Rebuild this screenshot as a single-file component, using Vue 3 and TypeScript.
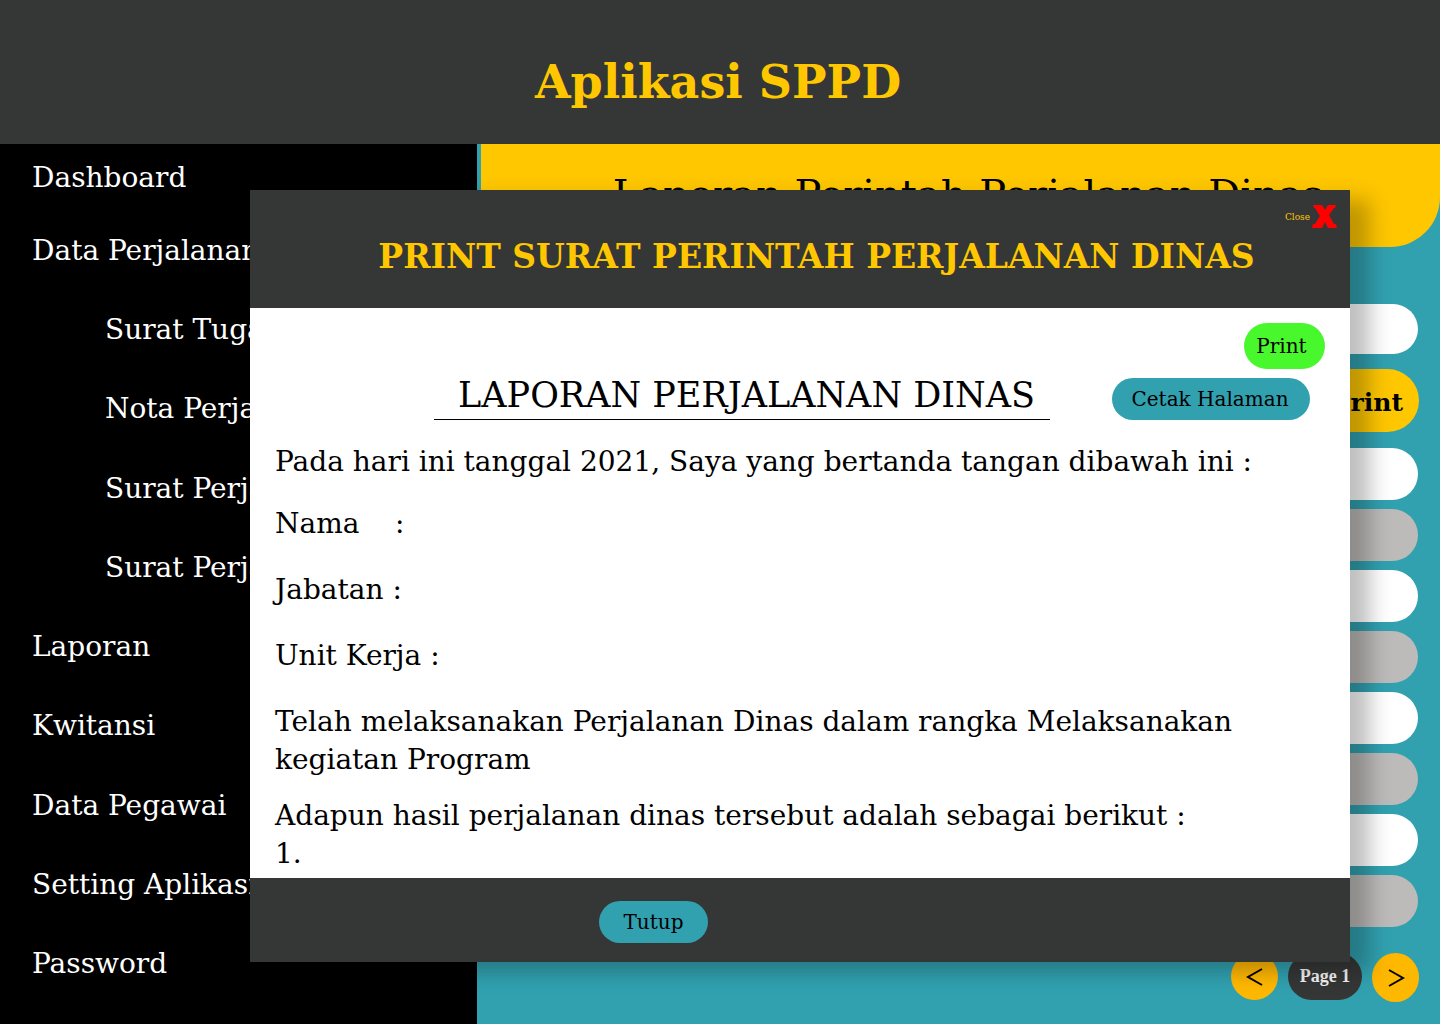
<script setup lang="ts">
interface MenuItem {
  label: string
  nested?: boolean
}

const menu: MenuItem[] = [
  { label: 'Data Perjalanan' },
  { label: 'Surat Tugas', nested: true },
  { label: 'Nota Perjalanan', nested: true },
  { label: 'Surat Perjalanan', nested: true },
  { label: 'Surat Perjalanan', nested: true },
  { label: 'Laporan' },
  { label: 'Kwitansi' },
  { label: 'Data Pegawai' },
  { label: 'Setting Aplikasi' },
  { label: 'Password' },
]

const fields: string[] = ['Nama\u00a0\u00a0\u00a0 :', 'Jabatan :', 'Unit Kerja :']
const rowCount = 8
</script>

<template>
  <div class="page">
    <header class="topbar">
      <h1>Aplikasi SPPD</h1>
    </header>

    <div class="body">
      <nav class="sidebar">
        <a class="item" href="#">Dashboard</a>
        <ul class="menu">
          <li v-for="(item, i) in menu" :key="i" :class="{ nested: item.nested }">
            <a class="item" href="#">{{ item.label }}</a>
          </li>
        </ul>
      </nav>

      <main class="content">
        <h2 class="banner">Laporan Perintah Perjalanan Dinas</h2>
        <input class="search" type="text" aria-label="Cari" />
        <button class="print-all" type="button">Print</button>
        <ul class="rows">
          <li v-for="n in rowCount" :key="n"></li>
        </ul>
        <div class="pager">
          <button class="step prev" type="button" aria-label="Sebelumnya">
            <svg width="18" height="20" viewBox="0 0 18 20"><path d="M16 2 2 10l14 8" /></svg>
          </button>
          <span class="current">Page 1</span>
          <button class="step next" type="button" aria-label="Berikutnya">
            <svg width="18" height="20" viewBox="0 0 18 20"><path d="m2 2 14 8-14 8" /></svg>
          </button>
        </div>
      </main>
    </div>

    <div class="overlay">
      <section class="dialog" role="dialog" aria-labelledby="dialog-title">
        <header class="dialog-head">
          <button class="close" type="button">
            <span>Close</span>
            <svg width="25" height="24" viewBox="0 0 25 24">
              <path d="M1 1h9l3 5 3-5h8l-1 3h-1l-5 7 5 9h2l1 4h-9l-3-6-3 6H0l1-4h2l5-8-5-8H2z" />
            </svg>
          </button>
          <h2 id="dialog-title">PRINT SURAT PERINTAH PERJALANAN DINAS</h2>
        </header>

        <div class="document">
          <button class="print" type="button">Print</button>
          <div class="doc-head">
            <h3>LAPORAN PERJALANAN DINAS</h3>
            <button class="pill cetak" type="button">Cetak Halaman</button>
          </div>
          <p class="intro">Pada hari ini tanggal 2021, Saya yang bertanda tangan dibawah ini :</p>
          <div class="fields">
            <p v-for="field in fields" :key="field">{{ field }}</p>
          </div>
          <p class="para">
            Telah melaksanakan Perjalanan Dinas dalam rangka Melaksanakan<br />kegiatan Program
          </p>
          <p class="para">Adapun hasil perjalanan dinas tersebut adalah sebagai berikut :<br />1.</p>
        </div>

        <footer class="dialog-foot">
          <button class="pill tutup" type="button">Tutup</button>
        </footer>
      </section>
    </div>
  </div>
</template>

<style>
body {
  margin: 0;
}
</style>

<style scoped>
.page {
  display: flex;
  flex-direction: column;
  min-height: 100vh;
  font-family: 'DejaVu Serif', serif;
  font-size: 28px;
  color: #000;
  background: #31a1b0;
}

h1,
h2,
h3,
p,
ul {
  margin: 0;
  padding: 0;
  list-style: none;
}

button {
  padding: 0;
  border: 0;
  font-family: inherit;
  color: inherit;
  cursor: pointer;
}

.topbar {
  box-sizing: border-box;
  height: 144px;
  padding: 50px 4px 0 0;
  text-align: center;
  background: #353736;
}

.topbar h1 {
  font-size: 46px;
  line-height: 64px;
  color: #ffc700;
}

.body {
  display: flex;
  flex: 1;
}

.sidebar {
  box-sizing: border-box;
  display: flex;
  flex: 0 0 477px;
  flex-direction: column;
  gap: 33px;
  padding: 14px 0 40px 32px;
  background: #000;
}

.item {
  display: block;
  line-height: 40px;
  color: #fff;
  text-decoration: none;
  white-space: nowrap;
}

.menu {
  display: flex;
  flex: 1;
  flex-direction: column;
  justify-content: space-between;
}

.nested {
  padding-left: 73px;
}

.content {
  display: flex;
  flex: 1;
  flex-direction: column;
  min-width: 0;
  padding: 0 22px 22px 4px;
}

.banner {
  box-sizing: border-box;
  height: 103px;
  margin-right: -22px;
  padding: 22px 0 0 15px;
  border-bottom-right-radius: 50px;
  font-size: 40px;
  font-weight: 400;
  line-height: 56px;
  text-align: center;
  background: #ffc700;
}

.search {
  box-sizing: border-box;
  height: 50px;
  margin: 57px 0 15px 20px;
  border: 0;
  border-radius: 25px;
  background: #fff;
}

.print-all {
  align-self: flex-end;
  width: 120px;
  height: 63px;
  margin-right: -1px;
  padding: 4px 16px 0 0;
  border-radius: 32px;
  font-size: 25px;
  font-weight: 700;
  text-align: right;
  background: #ffc700;
}

.rows {
  display: flex;
  flex-direction: column;
  gap: 9px;
  margin: 16px 0 26px 20px;
}

.rows li {
  height: 52px;
  border-radius: 26px;
  background: #fff;
}

.rows li:nth-child(even) {
  background: #bdbbb9;
}

.pager {
  display: flex;
  justify-content: flex-end;
  align-items: flex-start;
  gap: 10px;
  margin-right: -1px;
}

.step {
  display: flex;
  align-items: center;
  justify-content: center;
  width: 47px;
  height: 49px;
  border-radius: 50%;
  background: #ffb800;
}

.prev {
  height: 47px;
}

.step path {
  fill: none;
  stroke: #000;
  stroke-width: 2;
}

.current {
  width: 74px;
  height: 47px;
  border-radius: 24px;
  font-family: 'Liberation Serif', serif;
  font-size: 18px;
  font-weight: 700;
  line-height: 47px;
  text-align: center;
  color: #f2f2f2;
  background: #353736;
}

.overlay {
  position: absolute;
  inset: 0;
  box-sizing: border-box;
  display: flex;
  align-items: flex-start;
  min-height: 100vh;
  padding: 190px 90px 62px 250px;
}

.dialog {
  flex: 1;
  background: #fff;
  box-shadow: 20px 10px 20px rgba(0, 0, 0, 0.25);
}

.dialog-head {
  display: flex;
  flex-direction: column;
  height: 118px;
  color: #ffc700;
  background: #353736;
}

.close {
  display: flex;
  align-self: flex-end;
  align-items: center;
  gap: 2px;
  margin: 14px 13px 0 0;
  font-family: 'DejaVu Serif Condensed', 'DejaVu Serif', serif;
  font-size: 10px;
  color: #ffc700;
  background: none;
}

.close path {
  fill: #f00;
}

.dialog-head h2 {
  padding-left: 33px;
  font-size: 33px;
  line-height: 58px;
  text-align: center;
  white-space: nowrap;
}

.document {
  display: flex;
  flex-direction: column;
  padding: 15px 25px 5px;
}

.print {
  align-self: flex-end;
  width: 81px;
  height: 46px;
  padding-right: 6px;
  border-radius: 23px;
  font-size: 20px;
  background: #48f72c;
}

.doc-head {
  display: flex;
  align-items: flex-end;
  justify-content: flex-end;
  gap: 62px;
  padding: 0 15px 0 0;
}

.doc-head h3 {
  box-sizing: border-box;
  width: 616px;
  height: 51px;
  padding-left: 9px;
  border-bottom: 1px solid #000;
  font-size: 35px;
  font-weight: 400;
  line-height: 52px;
  text-align: center;
  white-space: nowrap;
}

.pill {
  height: 42px;
  border-radius: 21px;
  font-size: 20px;
  background: #31a1b0;
}

.cetak {
  width: 198px;
  padding-right: 2px;
}

.intro,
.para {
  line-height: 38px;
}

.intro {
  padding-top: 23px;
}

.fields {
  padding: 10px 0 14px;
  line-height: 66px;
}

.para {
  padding-bottom: 18px;
}

.para:last-child {
  padding-bottom: 0;
}

.dialog-foot {
  box-sizing: border-box;
  height: 84px;
  padding: 23px 0 0 349px;
  background: #353736;
}

.tutup {
  width: 109px;
}
</style>
